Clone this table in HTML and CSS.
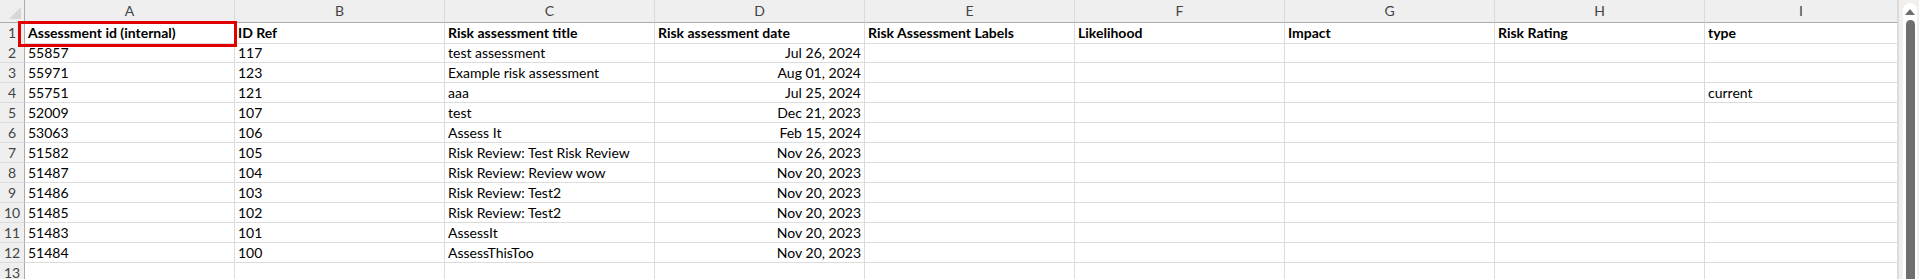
FILE: index.html
```html
<!DOCTYPE html>
<html lang="en">
<head>
  <meta charset="UTF-8">
  <title>Risk assessments export</title>
  <link rel="stylesheet" href="styles.css">
</head>
<body>
  <div class="window">

    <!-- Sheet grid -->
    <div class="sheet">
      <div class="row col-head">
        <div class="corner"></div>
        <div>A</div><div>B</div><div>C</div><div>D</div><div>E</div>
        <div>F</div><div>G</div><div>H</div><div>I</div>
      </div>

      <div class="row bold">
        <div class="num">1</div>
        <div class="selected">Assessment id (internal)<span class="mark"></span></div>
        <div>ID Ref</div>
        <div>Risk assessment title</div>
        <div>Risk assessment date</div>
        <div>Risk Assessment Labels</div>
        <div>Likelihood</div>
        <div>Impact</div>
        <div>Risk Rating</div>
        <div>type</div>
      </div>

      <div class="row">
        <div class="num">2</div><div>55857</div><div>117</div><div>test assessment</div>
        <div class="date">Jul 26, 2024</div><div></div><div></div><div></div><div></div><div></div>
      </div>
      <div class="row">
        <div class="num">3</div><div>55971</div><div>123</div><div>Example risk assessment</div>
        <div class="date">Aug 01, 2024</div><div></div><div></div><div></div><div></div><div></div>
      </div>
      <div class="row">
        <div class="num">4</div><div>55751</div><div>121</div><div>aaa</div>
        <div class="date">Jul 25, 2024</div><div></div><div></div><div></div><div></div><div>current</div>
      </div>
      <div class="row">
        <div class="num">5</div><div>52009</div><div>107</div><div>test</div>
        <div class="date">Dec 21, 2023</div><div></div><div></div><div></div><div></div><div></div>
      </div>
      <div class="row">
        <div class="num">6</div><div>53063</div><div>106</div><div>Assess It</div>
        <div class="date">Feb 15, 2024</div><div></div><div></div><div></div><div></div><div></div>
      </div>
      <div class="row">
        <div class="num">7</div><div>51582</div><div>105</div><div>Risk Review: Test Risk Review</div>
        <div class="date">Nov 26, 2023</div><div></div><div></div><div></div><div></div><div></div>
      </div>
      <div class="row">
        <div class="num">8</div><div>51487</div><div>104</div><div>Risk Review: Review wow</div>
        <div class="date">Nov 20, 2023</div><div></div><div></div><div></div><div></div><div></div>
      </div>
      <div class="row">
        <div class="num">9</div><div>51486</div><div>103</div><div>Risk Review: Test2</div>
        <div class="date">Nov 20, 2023</div><div></div><div></div><div></div><div></div><div></div>
      </div>
      <div class="row">
        <div class="num">10</div><div>51485</div><div>102</div><div>Risk Review: Test2</div>
        <div class="date">Nov 20, 2023</div><div></div><div></div><div></div><div></div><div></div>
      </div>
      <div class="row">
        <div class="num">11</div><div>51483</div><div>101</div><div>AssessIt</div>
        <div class="date">Nov 20, 2023</div><div></div><div></div><div></div><div></div><div></div>
      </div>
      <div class="row">
        <div class="num">12</div><div>51484</div><div>100</div><div>AssessThisToo</div>
        <div class="date">Nov 20, 2023</div><div></div><div></div><div></div><div></div><div></div>
      </div>
      <div class="row">
        <div class="num">13</div><div></div><div></div><div></div>
        <div></div><div></div><div></div><div></div><div></div><div></div>
      </div>
    </div>

    <!-- Vertical scrollbar -->
    <div class="scrollbar">
      <div class="track">
        <div class="arrow"></div>
        <div class="thumb"></div>
      </div>
    </div>

  </div>
</body>
</html>
```

FILE: styles.css
```css
* {
  margin: 0;
  padding: 0;
  box-sizing: border-box;
}

html, body {
  height: 279px;
  overflow: hidden;
  background: #fff;
  font-family: Lato, "Open Sans", sans-serif;
  color: #000;
}

.window {
  display: flex;
  height: 279px;
}

/* Sheet grid */
.sheet {
  flex: 1;
  display: flex;
  flex-direction: column;
}

.row {
  display: grid;
  grid-template-columns: 25px repeat(8, 210px) 193px;
  height: 20px;
  flex-shrink: 0;
}

.row > div {
  border-right: 1px solid #dcdcdc;
  border-bottom: 1px solid #dcdcdc;
  padding: 0 3px 1px 3px;
  font-size: 14px;
  line-height: 19px;
  white-space: nowrap;
  overflow: hidden;
}

.row.bold > div {
  font-weight: bold;
}

.row > .num {
  background: #efefef;
  color: #444;
  text-align: center;
  font-weight: normal !important;
  padding: 0;
  border-right: 1px solid #acacac;
  border-bottom: 1px solid #dcdcdc;
}

.row > .date {
  text-align: right;
}

/* Column letters */
.col-head {
  height: 23px;
}

.col-head > div {
  background: #efefef;
  color: #444;
  text-align: center;
  line-height: 22px;
  border-right: 1px solid #dadada;
  border-bottom: 1px solid #acacac;
}

.col-head > .corner {
  position: relative;
  border-right: 1px solid #acacac;
}

.corner::after {
  content: "";
  position: absolute;
  right: 3px;
  bottom: 3px;
  border-style: solid;
  border-width: 0 0 12px 12px;
  border-color: transparent transparent #d7d7d7 transparent;
}

/* Highlighted first header cell */
.selected {
  position: relative;
  overflow: visible !important;
}

.mark {
  position: absolute;
  left: -7px;
  top: -2px;
  width: 219px;
  height: 26px;
  border: 3px solid #e10000;
  z-index: 2;
}

/* Scrollbar */
.scrollbar {
  width: 21px;
  background: #f2efed;
  border-left: 1px solid #dcdcdc;
  padding: 3px 2px 0 4px;
}

.track {
  height: 100%;
  background: #fff;
  border-radius: 7px 7px 0 0;
  display: flex;
  flex-direction: column;
  align-items: center;
  padding-top: 6px;
}

.arrow {
  width: 0;
  height: 0;
  border-left: 5px solid transparent;
  border-right: 5px solid transparent;
  border-bottom: 6px solid #6e6e6e;
}

.thumb {
  width: 9px;
  flex: 1;
  margin-top: 5px;
  background: #6e6e6e;
  border-radius: 5px 5px 0 0;
}
```
